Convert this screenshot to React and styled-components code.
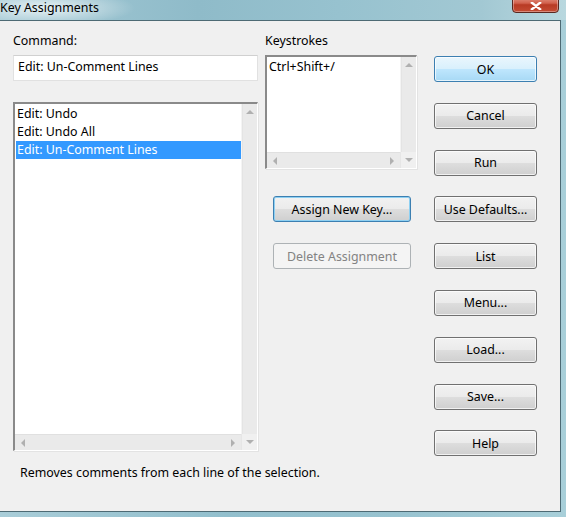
import React from "react";
import styled, { createGlobalStyle, css } from "styled-components";

const uiFont = `"Noto Sans", "Open Sans", "Noto Sans CJK SC", sans-serif`;

const GlobalStyle = createGlobalStyle`
  html, body {
    margin: 0;
    padding: 0;
    background: #8fbccb;
  }
  body {
    font-family: ${uiFont};
    font-size: 12.4px;
    color: #000;
  }
`;

const Window = styled.div`
  width: 566px;
  height: 517px;
  display: flex;
  flex-direction: column;
  background: linear-gradient(90deg, #a9cdd8 0%, #92bfcd 40%, #98c3d0 70%, #a8cfd9 100%);
  overflow: hidden;
`;

const TitleBar = styled.div`
  height: 20px;
  flex: 0 0 20px;
  display: flex;
  align-items: flex-start;
  justify-content: space-between;
  background:
    radial-gradient(ellipse 90px 18px at 45px 8px, rgba(255,255,255,0.75), rgba(255,255,255,0) 100%),
    linear-gradient(90deg, #a3c9d5 0%, #8fbbc9 35%, #97c2cf 60%, #a2c8d3 85%, #b9d8df 100%);
`;

const Title = styled.div`
  font-family: "Noto Sans", sans-serif;
  font-size: 12.4px;
  line-height: 14px;
  padding-top: 1px;
  color: #000;
`;

const CloseButton = styled.div`
  width: 45px;
  height: 16px;
  margin-top: -5px;
  margin-right: 7px;
  border: 1px solid #5a2820;
  border-radius: 0 0 4px 4px;
  background: linear-gradient(180deg, #e6a08f 0%, #d1604c 45%, #b83a24 55%, #c44c34 100%);
  box-shadow: inset 0 0 0 1px rgba(255,255,255,0.35);
  display: flex;
  justify-content: center;
  align-items: flex-end;
  svg { margin-bottom: 2px; }
`;

const FrameBody = styled.div`
  flex: 1;
  display: flex;
  padding: 0 5px 5px 0;
`;

const Client = styled.div`
  flex: 1;
  background: #f0f0f0;
  border-top: 1px solid #4d6a74;
  border-right: 1px solid #4d6a74;
  border-bottom: 1px solid #4d6a74;
  display: flex;
  flex-direction: column;
`;

const Main = styled.div`
  display: flex;
  padding: 13px 0 0 13px;
`;

const Column = styled.div`
  display: flex;
  flex-direction: column;
  width: ${p => p.$width}px;
  margin-left: ${p => p.$left || 0}px;
`;

const Label = styled.div`
  height: 14px;
  line-height: 14px;
  margin-bottom: 7px;
  white-space: nowrap;
`;

const TextBox = styled.div`
  height: 24px;
  box-sizing: content-box;
  border: 1px solid #e1e1e1;
  border-top-color: #d0d0d0;
  background: #fff;
  padding: 0 4px;
  line-height: 22px;
  white-space: nowrap;
`;

const ListFrame = styled.div`
  margin-top: ${p => p.$top || 0}px;
  height: ${p => p.$height}px;
  box-sizing: border-box;
  border-top: 2px solid #8a8a8a;
  border-left: 2px solid #8a8a8a;
  border-right: 1px solid #fff;
  border-bottom: 1px solid #fff;
  box-shadow: 1px 1px 0 #e3e3e3;
  background: #fff;
  display: grid;
  grid-template-columns: 1fr 16px;
  grid-template-rows: 1fr 16px;
`;

const ListBody = styled.div`
  padding: 1px 0 0 1px;
  overflow: hidden;
`;

const ListItem = styled.div`
  height: 18px;
  line-height: 18px;
  padding-left: 1px;
  white-space: nowrap;
  ${p => p.$selected && css`
    background: #3399ff;
    color: #fff;
  `}
`;

const ScrollBar = styled.div`
  background: #eaeaea;
  display: flex;
  flex-direction: ${p => (p.$horizontal ? "row" : "column")};
  justify-content: space-between;
  align-items: center;
  ${p => p.$horizontal
    ? css`border-top: 1px solid #e0e0e0;`
    : css`border-left: 1px solid #f4f4f4; box-shadow: inset 1px 0 0 #e4e4e4;`}
`;

const Corner = styled.div`
  background: #f0f0f0;
  border-left: 1px solid #e6e6e6;
  display: flex;
  justify-content: center;
  align-items: center;
`;

const Arrow = styled.span`
  width: 0;
  height: 0;
  margin: 6px;
  visibility: ${p => (p.$hidden ? "hidden" : "visible")};
  ${p => p.$dir === "up" && css`
    border-left: 4px solid transparent;
    border-right: 4px solid transparent;
    border-bottom: 4px solid #b0b0b0;
  `}
  ${p => p.$dir === "down" && css`
    border-left: 4px solid transparent;
    border-right: 4px solid transparent;
    border-top: 4px solid #b0b0b0;
  `}
  ${p => p.$dir === "left" && css`
    border-top: 4px solid transparent;
    border-bottom: 4px solid transparent;
    border-right: 4px solid #b0b0b0;
  `}
  ${p => p.$dir === "right" && css`
    border-top: 4px solid transparent;
    border-bottom: 4px solid transparent;
    border-left: 4px solid #b0b0b0;
  `}
`;

const Button = styled.div`
  height: 26px;
  box-sizing: border-box;
  margin-top: ${p => p.$top ?? 21}px;
  border: 1px solid #707070;
  border-radius: 3px;
  display: flex;
  align-items: center;
  justify-content: center;
  white-space: nowrap;
  background: linear-gradient(180deg, #f2f2f2 0%, #ebebeb 48%, #dddddd 52%, #cfcfcf 100%);
  box-shadow: inset 0 0 0 1px rgba(255,255,255,0.7);
  ${p => p.$variant === "default" && css`
    border-color: #3c7fb1;
    background: linear-gradient(180deg, #eaf6fd 0%, #d9f0fc 48%, #bee6fd 52%, #a7d9f5 100%);
  `}
  ${p => p.$variant === "focus" && css`
    border-color: #3c7fb1;
    box-shadow: inset 0 0 0 1px #8ed0f2;
  `}
  ${p => p.$variant === "disabled" && css`
    border-color: #adb2b5;
    background: #f4f4f4;
    color: #838383;
    box-shadow: none;
  `}
`;

const Status = styled.div`
  padding: 9px 0 0 20px;
  line-height: 16px;
  white-space: nowrap;
`;

function ListBox({ height, top, children }) {
  return (
    <ListFrame $height={height} $top={top}>
      <ListBody>{children}</ListBody>
      <ScrollBar>
        <Arrow $dir="up" />
        <Arrow $dir="down" $hidden />
      </ScrollBar>
      <ScrollBar $horizontal>
        <Arrow $dir="left" />
        <Arrow $dir="right" />
      </ScrollBar>
      <Corner>
        <Arrow $dir="down" />
      </Corner>
    </ListFrame>
  );
}

const commands = ["Edit: Undo", "Edit: Undo All", "Edit: Un-Comment Lines"];
const sideButtons = ["Cancel", "Run", "Use Defaults...", "List", "Menu...", "Load...", "Save...", "Help"];

export default function App() {
  return (
    <>
      <GlobalStyle />
      <Window>
        <TitleBar>
          <Title>Key Assignments</Title>
          <CloseButton>
            <svg width="12" height="8" viewBox="0 0 12 8">
              <path d="M1 0 L6 4 L11 0 M1 8 L6 4 L11 8" stroke="#fff" strokeWidth="2.4" fill="none" />
            </svg>
          </CloseButton>
        </TitleBar>
        <FrameBody>
          <Client>
            <Main>
              <Column $width={245}>
                <Label>Command:</Label>
                <TextBox>Edit: Un-Comment Lines</TextBox>
                <ListBox height={349} top={21}>
                  {commands.map((c, i) => (
                    <ListItem key={c} $selected={i === 2}>{c}</ListItem>
                  ))}
                </ListBox>
              </Column>
              <Column $width={152} $left={7}>
                <Label>Keystrokes</Label>
                <ListBox height={114}>
                  <ListItem>Ctrl+Shift+/</ListItem>
                </ListBox>
                <Column $width={138} $left={8}>
                  <Button $variant="focus" $top={27}>Assign New Key...</Button>
                  <Button $variant="disabled">Delete Assignment</Button>
                </Column>
              </Column>
              <Column $width={103} $left={17}>
                <Button $variant="default" $top={22}>OK</Button>
                {sideButtons.map(b => (
                  <Button key={b} $top={20.8}>{b}</Button>
                ))}
              </Column>
            </Main>
            <Status>Removes comments from each line of the selection.</Status>
          </Client>
        </FrameBody>
      </Window>
    </>
  );
}
